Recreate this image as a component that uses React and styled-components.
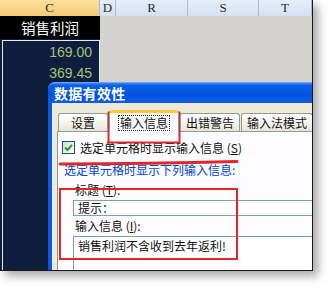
import React from 'react';
import styled, { createGlobalStyle } from 'styled-components';

const GlobalStyle = createGlobalStyle`
  html, body {
    margin: 0;
    padding: 0;
    background: #ffffff;
  }
`;

const cjk = `"Noto Sans CJK SC", "Noto Sans", sans-serif`;

const Page = styled.div`
  width: 334px;
  height: 293px;
  background: #ffffff;
  overflow: hidden;
`;

const Screen = styled.div`
  position: relative;
  width: 312px;
  height: 270px;
  overflow: hidden;
  border-right: 1px solid #1a1a1a;
  border-bottom: 1px solid #1a1a1a;
  box-shadow: 5px 5px 9px rgba(0, 0, 0, 0.35);
  background: #d4d3cf;
  display: flex;
  flex-direction: column;
`;

const HeaderRow = styled.div`
  display: grid;
  grid-template-columns: 100px 16px 72px 71px 1fr;
  height: 15px;
  border-bottom: 1px solid #9fb2cc;
`;

const HeaderCell = styled.div`
  display: flex;
  align-items: center;
  justify-content: center;
  font-family: "Liberation Serif", serif;
  font-size: 13px;
  color: #2a2a2a;
  border-right: 1px solid #a9bad2;
  background: ${p => (p.selected
    ? 'linear-gradient(#fbdf9f, #f5cc74)'
    : 'linear-gradient(#e6edf8, #d6e1f1)')};
`;

const Sheet = styled.div`
  flex: 1;
  display: grid;
  grid-template-columns: 100px 1fr;
`;

const ColumnC = styled.div`
  background: #0f1e3c;
  display: flex;
  flex-direction: column;
`;

const TitleCell = styled.div`
  height: 23px;
  background: #000000;
  color: #ffffff;
  font-family: ${cjk};
  font-size: 14.5px;
  display: flex;
  align-items: center;
  justify-content: center;
`;

const Range = styled.div`
  flex: 1;
  margin: 1px 0 0 2px;
  border: 1px solid #e8ecf2;
  border-bottom: none;
`;

const NumberCell = styled.div`
  height: 21px;
  display: flex;
  align-items: center;
  justify-content: flex-end;
  padding-right: 7px;
  font-family: "Liberation Sans", Arial, sans-serif;
  font-size: 14px;
  color: #9fc577;
`;

const GrayArea = styled.div`
  background: #d4d3cf;
`;

const Dialog = styled.div`
  position: absolute;
  left: 48px;
  top: 82px;
  width: 290px;
  height: 210px;
  background: #0b58d8;
  border-radius: 7px 7px 0 0;
  padding: 0 0 0 4px;
  display: flex;
  flex-direction: column;
  box-sizing: border-box;
`;

const TitleBar = styled.div`
  height: 28px;
  margin-left: -4px;
  padding-left: 6px;
  border-radius: 7px 7px 0 0;
  background: linear-gradient(#3c8df6 0%, #0a5fe6 12%, #0553e0 60%, #0a5ce8 100%);
  border-top: 1px solid #6aa6f8;
  box-sizing: border-box;
  display: flex;
  align-items: center;
  color: #ffffff;
  font-family: ${cjk};
  font-weight: 700;
  font-size: 14px;
  letter-spacing: 0.3px;
`;

const Body = styled.div`
  flex: 1;
  background: #ece9d8;
  padding: 6px 0 0 5px;
  display: flex;
  flex-direction: column;
`;

const Tabs = styled.div`
  display: flex;
  align-items: flex-end;
  height: 22px;
  gap: 1px;
  margin-left: 1px;
`;

const Tab = styled.div`
  width: ${p => p.w}px;
  flex: none;
  height: ${p => (p.active ? 22 : 18)}px;
  box-sizing: border-box;
  border: 1px solid #919b9c;
  border-bottom: none;
  border-top: ${p => (p.active ? '3px solid #ffc83c' : '1px solid #919b9c')};
  border-radius: 3px 3px 0 0;
  background: ${p => (p.active ? '#fcfcfe' : 'linear-gradient(#ffffff, #f1efe6 70%, #e6e3d5)')};
  display: flex;
  align-items: center;
  justify-content: center;
  font-family: ${cjk};
  font-size: 12px;
  color: #111;
  margin-bottom: ${p => (p.active ? -1 : 0)}px;
  position: relative;
  z-index: ${p => (p.active ? 2 : 1)};
`;

const Focus = styled.span`
  outline: 1px dotted #333;
  padding: 0 1px;
  line-height: 14px;
`;

const Panel = styled.div`
  flex: 1;
  background: #fcfcfe;
  border: 1px solid #919b9c;
  border-right: none;
  border-bottom: none;
  padding: 9px 0 0 4px;
  display: flex;
  flex-direction: column;
  font-family: ${cjk};
  font-size: 12px;
  color: #111;
`;

const CheckRow = styled.div`
  display: flex;
  align-items: center;
  gap: 5px;
  height: 13px;
`;

const CheckBox = styled.span`
  width: 13px;
  height: 13px;
  box-sizing: border-box;
  border: 1px solid #1c5180;
  background: linear-gradient(135deg, #dcdcd6, #ffffff);
  display: flex;
  align-items: center;
  justify-content: center;
`;

const GroupLabel = styled.div`
  color: #0046d5;
  margin: 8px 0 0 2px;
  height: 16px;
  line-height: 16px;
`;

const Group = styled.div`
  padding: 4px 0 0 11px;
  display: flex;
  flex-direction: column;
`;

const FieldLabel = styled.div`
  height: 16px;
  line-height: 16px;
  margin-left: 2px;
`;

const Field = styled.div`
  height: ${p => p.h}px;
  box-sizing: border-box;
  border: 1px solid #7f9db9;
  border-right: none;
  background: #ffffff;
  margin: 2px 0 2px;
  padding: ${p => (p.multi ? '1px 0 0 4px' : '0 0 0 4px')};
  display: flex;
  align-items: ${p => (p.multi ? 'flex-start' : 'center')};
  line-height: 16px;
`;

const Overlay = styled.svg`
  position: absolute;
  left: 0;
  top: 0;
  pointer-events: none;
`;

const Check = () => (
  <svg width="9" height="9" viewBox="0 0 9 9">
    <path d="M1 4.5 L3.5 7 L8 1.8" fill="none" stroke="#21a121" strokeWidth="2" />
  </svg>
);

const App = () => (
  <Page>
    <GlobalStyle />
    <Screen>
      <HeaderRow>
        <HeaderCell selected>C</HeaderCell>
        <HeaderCell>D</HeaderCell>
        <HeaderCell>R</HeaderCell>
        <HeaderCell>S</HeaderCell>
        <HeaderCell>T</HeaderCell>
      </HeaderRow>
      <Sheet>
        <ColumnC>
          <TitleCell>销售利润</TitleCell>
          <Range>
            <NumberCell>169.00</NumberCell>
            <NumberCell>369.45</NumberCell>
          </Range>
        </ColumnC>
        <GrayArea />
      </Sheet>

      <Dialog>
        <TitleBar>数据有效性</TitleBar>
        <Body>
          <Tabs>
            <Tab w={50}>设置</Tab>
            <Tab w={70} active><Focus>输入信息</Focus></Tab>
            <Tab w={60}>出错警告</Tab>
            <Tab w={72}>输入法模式</Tab>
          </Tabs>
          <Panel>
            <CheckRow>
              <CheckBox><Check /></CheckBox>
              <span>选定单元格时显示输入信息 (<u>S</u>)</span>
            </CheckRow>
            <GroupLabel>选定单元格时显示下列输入信息:</GroupLabel>
            <Group>
              <FieldLabel>标题 (<u>T</u>):</FieldLabel>
              <Field h={16}>提示：</Field>
              <FieldLabel>输入信息 (<u>I</u>):</FieldLabel>
              <Field h={60} multi>销售利润不含收到去年返利!</Field>
            </Group>
          </Panel>
        </Body>
      </Dialog>

      <Overlay width="312" height="270" viewBox="0 0 312 270">
        <rect x="108.5" y="112.5" width="71" height="30" fill="none" stroke="#e3262a" strokeWidth="2" />
        <path d="M60 164 Q150 163.5 237 161.5" fill="none" stroke="#e3262a" strokeWidth="3" strokeLinecap="round" />
        <rect x="60" y="189" width="177" height="70" fill="none" stroke="#e3262a" strokeWidth="2" />
      </Overlay>
    </Screen>
  </Page>
);

export default App;
